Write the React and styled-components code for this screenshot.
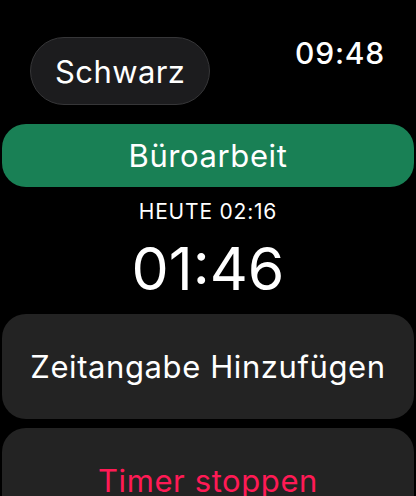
import styled, { createGlobalStyle } from 'styled-components'

const GlobalStyle = createGlobalStyle`
  html, body {
    margin: 0;
    padding: 0;
    background: #000;
  }
  body {
    font-family: Inter, "Noto Sans", sans-serif;
    color: #fff;
    overflow: hidden;
  }
`;

const Screen = styled.div`
  width: 416px;
  height: 496px;
  background: #000;
  overflow: hidden;
`;

const Header = styled.div`
  display: flex;
  justify-content: space-between;
  align-items: flex-start;
  padding: 37px 31px 0 30px;
  margin-bottom: 19px;
`;

const Pill = styled.div`
  height: 68px;
  box-sizing: border-box;
  padding: 0 24px;
  border-radius: 34px;
  background: #1c1c1e;
  border: 1.5px solid #363638;
  display: flex;
  align-items: center;
  font-size: 31px;
  letter-spacing: 0.4px;
`;

const Clock = styled.div`
  font-size: 30px;
  font-weight: 500;
  line-height: 1;
  margin-top: 1px;
  letter-spacing: 0.8px;
`;

const Button = styled.div`
  margin: 0 2px;
  height: ${p => p.$height || 104}px;
  border-radius: 24px;
  background: ${p => p.$bg || '#232323'};
  color: ${p => p.$color || '#fff'};
  display: flex;
  align-items: center;
  justify-content: center;
  font-size: 31px;
  letter-spacing: 0.6px;
`;

const Today = styled.div`
  margin-top: 13px;
  text-align: center;
  font-size: 21px;
  line-height: 24px;
  letter-spacing: 0.8px;
`;

const Elapsed = styled.div`
  margin-top: 14px;
  text-align: center;
  font-size: 59px;
  line-height: 62px;
  font-weight: 400;
`;

const Actions = styled.div`
  margin-top: 14px;
  display: flex;
  flex-direction: column;
  gap: 9px;
`;

export default function App() {
  return (
    <Screen>
      <GlobalStyle />
      <Header>
        <Pill>Schwarz</Pill>
        <Clock>09:48</Clock>
      </Header>
      <Button $bg="#198055" $height={63}>Büroarbeit</Button>
      <Today>HEUTE 02:16</Today>
      <Elapsed>01:46</Elapsed>
      <Actions>
        <Button $height={105}>Zeitangabe Hinzufügen</Button>
        <Button $height={105} $color="#ff1a55">Timer stoppen</Button>
      </Actions>
    </Screen>
  )
}
